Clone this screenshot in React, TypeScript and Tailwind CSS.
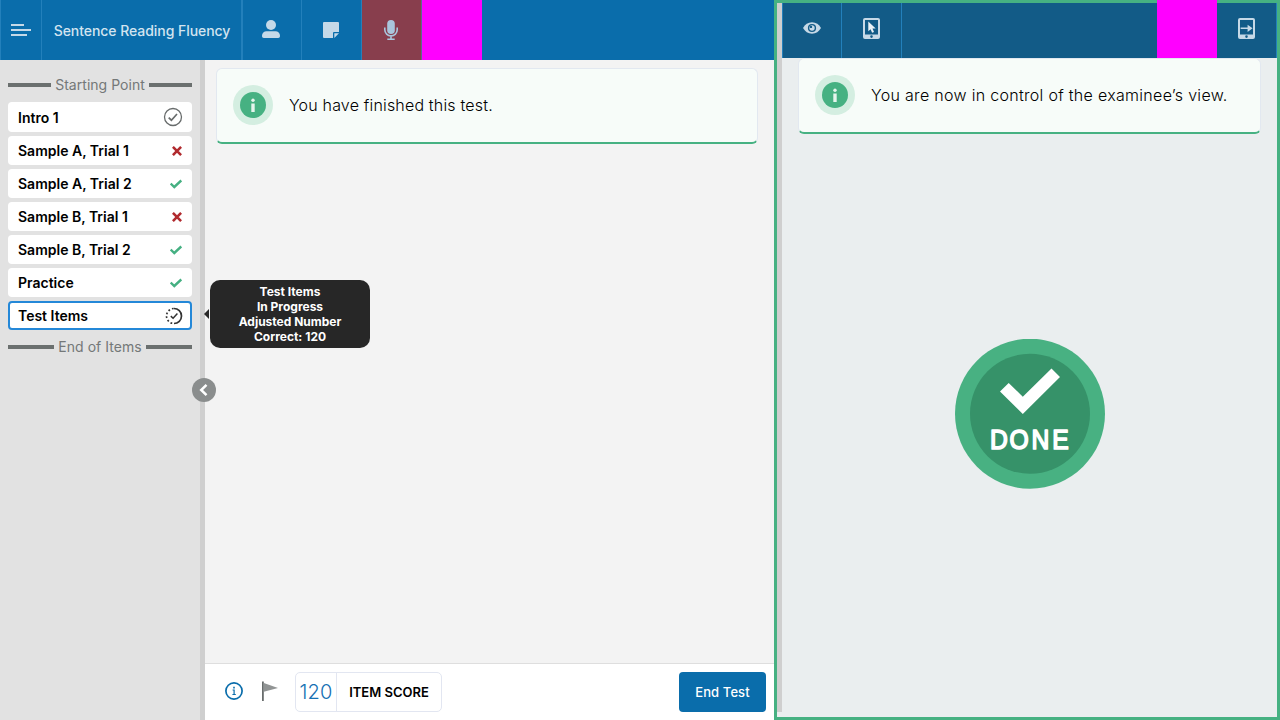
import React from "react";

type Status = "done" | "wrong" | "right" | "progress";

const items: { label: string; status: Status }[] = [
  { label: "Intro 1", status: "done" },
  { label: "Sample A, Trial 1", status: "wrong" },
  { label: "Sample A, Trial 2", status: "right" },
  { label: "Sample B, Trial 1", status: "wrong" },
  { label: "Sample B, Trial 2", status: "right" },
  { label: "Practice", status: "right" },
  { label: "Test Items", status: "progress" },
];

function StatusIcon({ status }: { status: Status }) {
  if (status === "done")
    return (
      <svg className="-mr-px" width="20" height="20" viewBox="0 0 20 20" fill="none" stroke="#686c6c">
        <circle cx="10" cy="10" r="8.5" strokeWidth="1.3" />
        <path d="M5.7 10.6l2.7 2.6 5.6-6.2" strokeWidth="1.7" />
      </svg>
    );
  if (status === "progress")
    return (
      <svg className="-mr-px" width="18" height="18" viewBox="0 0 18 18" fill="none" stroke="#333">
        <path d="M9 1.5a7.5 7.5 0 1 1 0 15" strokeWidth="1.7" />
        <path d="M9 16.5A7.5 7.5 0 0 1 9 1.5" strokeWidth="1.7" strokeDasharray="1.8 2.1" strokeDashoffset="-1.8" />
        <path d="M5.8 9.1l2.3 2.2 4.3-4.7" strokeWidth="1.5" />
      </svg>
    );
  if (status === "wrong")
    return (
      <svg className="mr-px" width="10" height="10" viewBox="0 0 10 10" fill="none" stroke="#b12a2e" strokeWidth="2.6">
        <path d="M.9.9l8.2 8.2M9.1.9L.9 9.1" />
      </svg>
    );
  return (
    <svg className="mr-px" width="12" height="10" viewBox="0 0 12 10" fill="none" stroke="#45b082" strokeWidth="2.4">
      <path d="M.7 4.6l3.6 3.4L11.3 1.5" />
    </svg>
  );
}

function Divider({ children }: { children: React.ReactNode }) {
  return (
    <div className="flex h-[18px] items-center gap-1 text-[14px] leading-[18px] tracking-[0.03px] text-[#747878]">
      <span className="h-1 flex-1 bg-[#6b706f]" />
      <span>{children}</span>
      <span className="h-1 flex-1 bg-[#6b706f]" />
    </div>
  );
}

function Notice({ children, className }: { children: React.ReactNode; className: string }) {
  return (
    <div className="flex h-[76px] items-center rounded-md border border-b-2 border-[#e2e8f0] border-b-[#46b182] bg-[#f7fcf9] pb-px pl-4">
      <span className="flex size-10 items-center justify-center rounded-full bg-[#d4eee1]">
        <svg width="26" height="26" viewBox="0 0 26 26">
          <circle cx="13" cy="13" r="13" fill="#46b182" />
          <circle cx="13" cy="8.2" r="1.7" fill="#e5f5ed" />
          <path d="M11.3 11.5h3.4V20h-3.4z" fill="#e5f5ed" />
        </svg>
      </span>
      <span className={`ml-4 text-base font-light text-black ${className}`}>{children}</span>
    </div>
  );
}

function Tablet({ children }: { children: React.ReactNode }) {
  return (
    <svg width="17" height="21" viewBox="0 0 17 21" fill="none">
      <path
        fill="#c6d9e7"
        fillRule="evenodd"
        d="M2 0h13a2 2 0 0 1 2 2v17a2 2 0 0 1-2 2H2a2 2 0 0 1-2-2V2a2 2 0 0 1 2-2zM2 2v14.500h13V2zM8.500 17.300a1.300 1.300 0 1 0 0 2.600 1.300 1.300 0 0 0 0-2.600z"
      />
      {children}
    </svg>
  );
}

export default function App() {
  return (
    <div className="flex h-[720px] w-[1280px] overflow-hidden bg-[#f3f3f3] font-['Inter',sans-serif]">
      <div className="flex w-[774px] flex-col">
        <header className="flex h-[60px] shrink-0 bg-[#0a6dab]">
          <div className="flex w-[42px] items-center justify-center border-x border-[#2380bb]">
            <svg width="20" height="12" viewBox="0 0 20 12" fill="#c5d9e8">
              <path d="M0 0h13v2H0zM0 5h20v2H0zM0 10h16v2H0z" />
            </svg>
          </div>
          <div className="flex w-[201px] items-center justify-center border-r-2 border-[#2380bb] pl-px text-[14px] font-medium tracking-[-0.05px] text-[#d3e4f0]">
            Sentence Reading Fluency
          </div>
          <div className="flex w-[59px] items-center justify-center border-r border-[#2380bb] pb-0.5 pr-0.5">
            <svg width="18" height="18" viewBox="0 0 18 18" fill="#c5d9e8">
              <circle cx="9" cy="5" r="5" />
              <path d="M4.500 11.200h9A4.500 4.500 0 0 1 18 15.700v.5a1.800 1.800 0 0 1-1.800 1.800H1.800A1.800 1.800 0 0 1 0 16.200v-.5a4.500 4.500 0 0 1 4.500-4.500z" />
            </svg>
          </div>
          <div className="flex w-[60px] items-center justify-center border-r border-[#2380bb] pr-px">
            <svg width="16" height="16" viewBox="0 0 16 16" fill="#c5d9e8">
              <path d="M1 0h14a1 1 0 0 1 1 1v9h-5a1 1 0 0 0-1 1v5H1a1 1 0 0 1-1-1V1a1 1 0 0 1 1-1z" />
              <path d="M11.300 11.300H16L11.300 16z" />
            </svg>
          </div>
          <div className="flex w-[60px] items-center justify-center border-r border-[#5e6891] bg-[#883e4d] pr-px">
            <svg width="14" height="20" viewBox="0 0 14 20" fill="none" stroke="#a9c6dd" strokeWidth="1.600">
              <rect x="3.200" y="0" width="7.600" height="14" rx="3.800" fill="#a9c6dd" stroke="none" />
              <path d="M.8 7.500v2.200a6.200 6.200 0 0 0 12.400 0V7.500M7 16v3M3.300 19.200h7.400" />
            </svg>
          </div>
          <div className="w-[60px] bg-[#ff00ff]" />
        </header>

        <div className="flex min-h-0 flex-1">
          <aside className="relative w-[205px] shrink-0 border-r-[5px] border-[#cfcfcf] bg-[#e2e2e2] px-2 pt-4">
            <Divider>Starting Point</Divider>
            <ul className="mt-2 mb-2 flex flex-col gap-1">
              {items.map((item) => (
                <li
                  key={item.label}
                  className={`flex items-center justify-between rounded-[4px] text-[14px] font-semibold leading-[18px] text-black ${
                    item.status === "progress"
                      ? "h-[29px] border-2 border-[#2488d8] bg-white px-2"
                      : item.status === "done"
                        ? "h-[30px] bg-white px-2.5"
                        : "h-[29px] bg-white pl-2.5 pr-[9px]"
                  }`}
                >
                  <span className={item.status === "done" ? "pt-0.5" : ""}>{item.label}</span>
                  <StatusIcon status={item.status} />
                </li>
              ))}
            </ul>
            <Divider>End of Items</Divider>
            <div className="absolute left-[204px] top-[220px] z-10 flex items-center">
              <svg width="6" height="10" viewBox="0 0 6 10" fill="#272727">
                <path d="M0 5l5-5v10z" />
              </svg>
              <div className="w-40 rounded-[10px] bg-[#272727] py-1 text-center text-xs font-bold leading-[15px] text-white">
                Test Items
                <br />
                In Progress
                <br />
                Adjusted Number
                <br />
                Correct: 120
              </div>
            </div>
            <div className="absolute left-[192px] top-[318px] z-10 flex size-6 items-center justify-center rounded-full bg-[#8a8d8d]">
              <svg width="24" height="24" viewBox="0 0 24 24" fill="none" stroke="#fff" strokeWidth="2.500">
                <path d="M14.500 6.800L9.200 12l5.300 5.200" />
              </svg>
            </div>
          </aside>
          <div className="flex flex-1 flex-col">
            <main className="flex-1 pl-[11px] pr-4 pt-2">
              <Notice className="tracking-[0.18px]">You have finished this test.</Notice>
            </main>
            <footer className="flex h-[57px] items-center border-t border-[#dedede] bg-white pl-5 pr-2">
              <svg className="-mt-0.5" width="18" height="18" viewBox="0 0 18 18" fill="none" stroke="#0a6dab">
                <circle cx="9" cy="9" r="8.100" strokeWidth="1.700" />
                <path d="M7.600 8h1.500v4.200M7.400 12.500h3.400" strokeWidth="1.200" />
                <path d="M9 4.800v1.600" strokeWidth="1.600" />
              </svg>
              <svg className="-mt-0.5 ml-[19px]" width="16" height="20" viewBox="0 0 16 20">
                <path d="M0 .5h1.800V20H0z" fill="#686c6c" />
                <path d="M1.800 2L16 7 1.800 10.800z" fill="#919494" />
              </svg>
              <div className="ml-[17px] flex h-10 w-[147px] rounded-[5px] border border-[#e2e6f1]">
                <span className="flex w-[41px] items-center justify-center border-r border-[#e2e6f1] text-[20px] font-light tracking-[0.2px] text-[#1570b4]">
                  120
                </span>
                <span className="flex flex-1 items-center justify-center pt-0.5 text-[13px] font-semibold text-black">
                  ITEM SCORE
                </span>
              </div>
              <button className="ml-auto h-10 w-[87px] rounded-[4px] bg-[#0a6dab] pt-0.5 text-[13px] font-medium tracking-[0.1px] text-white">
                End Test
              </button>
            </footer>
          </div>
        </div>
      </div>

      <section className="flex w-[506px] border-[3px] border-[#46b182] bg-[#eaeeef]">
        <div className="mb-[5px] w-[5px] bg-[#cfcfcf]" />
        <div className="flex flex-1 flex-col">
          <header className="flex h-[55px] shrink-0 border-x border-[#2380bb] bg-[#125b87]">
            <div className="flex w-[59px] items-center justify-center border-r border-[#2380bb] pb-[5px]">
              <svg width="18" height="12" viewBox="0 0 18 12">
                <path d="M0 6C2 2.500 5 .3 9 .3S16 2.500 18 6c-2 3.500-5 5.700-9 5.700S2 9.500 0 6z" fill="#c6d9e7" />
                <circle cx="9" cy="6" r="4.100" fill="#125b87" />
                <circle cx="9" cy="6" r="2.700" fill="#c6d9e7" />
                <circle cx="8" cy="4.900" r="1.200" fill="#125b87" />
              </svg>
            </div>
            <div className="flex w-[60px] items-center justify-center border-r border-[#2380bb] pb-1">
              <Tablet>
                <path d="M5.300 3.500v9.800l2.300-2 1.500 3.500 1.900-.8-1.500-3.400h3.200z" fill="#eaf2f7" />
              </Tablet>
            </div>
            <div className="-mt-[3px] ml-auto h-[58px] w-[60px] bg-[#ff00ff]" />
            <div className="flex w-[59px] items-center justify-center pb-1">
              <Tablet>
                <path d="M2.600 9.600h7V6.700l5 3.600-5 3.600V11h-7z" fill="#c6d9e7" />
              </Tablet>
            </div>
          </header>
          <main className="flex flex-1 flex-col pl-4 pr-4">
            <Notice className="tracking-[0.3px]">You are now in control of the examinee’s view.</Notice>
            <svg className="mx-auto mt-[205px]" width="150" height="150" viewBox="0 0 150 150">
              <circle cx="75" cy="74.700" r="75" fill="#48b182" />
              <circle cx="75" cy="74.700" r="60" fill="#369269" />
              <path d="M45 52.500l8.700-8.500L67.800 57.700 96.500 29.500l8.500 8.500L67.800 75z" fill="#fff" />
              <g transform="scale(0.88 1)">
                <text
                  x="39.800 62 87 110.500"
                  y="110"
                  fontFamily="Liberation Sans, sans-serif"
                  fontSize="28"
                  fill="#fff"
                  stroke="#fff"
                  strokeWidth="1.700"
                  strokeLinejoin="round"
                >
                  DONE
                </text>
              </g>
            </svg>
          </main>
        </div>
      </section>
    </div>
  );
}
